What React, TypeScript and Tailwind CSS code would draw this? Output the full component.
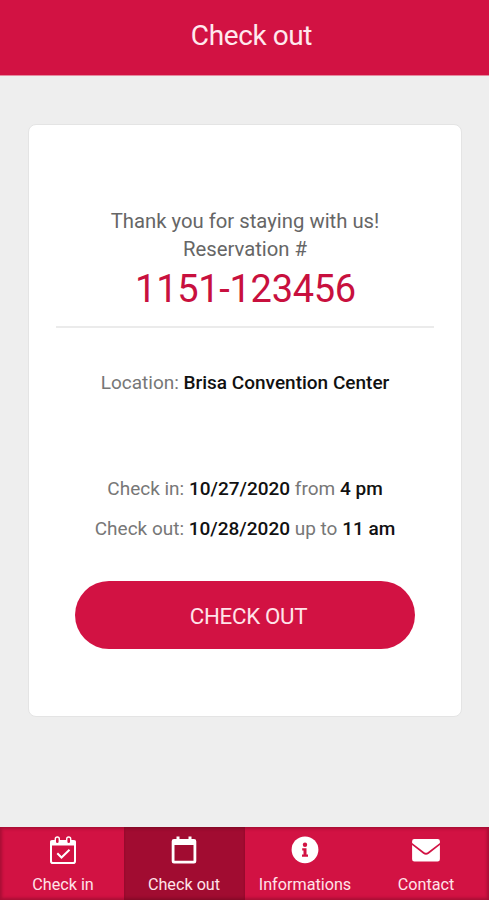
import type { ReactNode } from 'react'
import clsx from 'clsx'

function CalendarCheckIcon() {
  return (
    <svg width="28" height="30" viewBox="0 0 28 30" fill="none" stroke="#fff">
      <rect x="2" y="6" width="24" height="22" rx="1.8" strokeWidth="2" />
      <path d="M1.400 5.500h25.200v5H1.400z" fill="#fff" stroke="none" />
      <rect x="6.300" y="2" width="4" height="6.800" rx="2" fill="#d21243" strokeWidth="1.400" />
      <rect x="17.700" y="2" width="4" height="6.800" rx="2" fill="#d21243" strokeWidth="1.400" />
      <path d="M8.300 18.300l4.200 4.200 8-7.800" strokeWidth="2" />
    </svg>
  )
}

function CalendarIcon() {
  return (
    <svg width="28" height="30" viewBox="0 0 28 30" fill="none">
      <path
        fill="#fff"
        fillRule="evenodd"
        d="M6.500 1.500h3V4h9V1.500h3V4H24a2.300 2.300 0 0 1 2.300 2.300v19.900A2.300 2.300 0 0 1 24 28.500H4a2.300 2.300 0 0 1-2.300-2.300V6.300A2.300 2.300 0 0 1 4 4h2.500zM4.500 10v15.700h19V10z"
      />
    </svg>
  )
}

function InfoIcon() {
  return (
    <svg width="28" height="30" viewBox="0 0 28 30">
      <circle cx="14" cy="14.800" r="13.400" fill="#fff" />
      <circle cx="14" cy="9.800" r="2.200" fill="#d21243" />
      <path d="M11.200 13.300h4.300v6.200h1.500v2.200h-6v-2.200h1.500v-4h-1.300z" fill="#d21243" />
    </svg>
  )
}

function MailIcon() {
  return (
    <svg width="28" height="30" viewBox="0 0 28 30" fill="#fff">
      <path d="M2.500 4h23A2.300 2.300 0 0 1 27.900 6.300v1.600L15.700 17.200a2.900 2.900 0 0 1-3.400 0L.1 7.900V6.300A2.300 2.300 0 0 1 2.500 4z" />
      <path d="M.1 10l11.100 8.700a4.700 4.700 0 0 0 5.600 0L27.900 10v14.200a2.300 2.300 0 0 1-2.300 2.300H2.400A2.300 2.300 0 0 1 .1 24.200z" />
    </svg>
  )
}

interface TabProps {
  label: string
  icon: ReactNode
  active?: boolean
}

function Tab({ label, icon, active }: TabProps) {
  return (
    <button
      className={clsx(
        'flex w-[121px] shrink-0 flex-col items-center pt-2 pr-0.5 text-[16.200px] leading-5 text-[#ffe3e9]',
        active && 'bg-[#a10c31] shadow-[inset_0_3px_3px_-1px_#850a28,inset_0_-3px_3px_-1px_#850a28]',
      )}
    >
      {icon}
      <span className="mt-2.5 ml-px">{label}</span>
    </button>
  )
}

export default function App() {
  return (
    <div className="flex h-[900px] w-[489px] flex-col bg-[#eeeeee] font-['Roboto',sans-serif]">
      <header className="flex h-[76px] shrink-0 items-center justify-center border-b border-[#e58a9f] bg-[#d21243] pb-1 pl-[14px]">
        <h1 className="text-[28px] leading-8 tracking-[-0.4px] text-[#ffe9ee]">Check out</h1>
      </header>

      <main className="flex-1 px-7 pt-12">
        <section className="flex h-[593px] w-[434px] flex-col items-center rounded-lg border border-[#e4e4e4] bg-white px-[27px] pt-[82px] text-center text-[20.300px] text-[#666]">
          <p className="leading-7">Thank you for staying with us!</p>
          <p className="leading-7">Reservation #</p>
          <p className="mt-0.5 pl-px text-[38px] leading-[48px] tracking-[-0.3px] text-[#c8103e]">1151-123456</p>
          <hr className="mt-[13px] w-full border-t-2 border-[#ebebeb]" />

          <p className="mt-[41px] text-[19px] leading-7 text-[#777]">
            Location: <b className="font-medium text-[#111]">Brisa Convention Center</b>
          </p>

          <p className="mt-[78px] text-[19px] leading-7 text-[#777]">
            Check in: <b className="font-medium text-[#111]">10/27/2020</b> from{' '}
            <b className="font-medium text-[#111]">4 pm</b>
          </p>
          <p className="mt-3 text-[19px] leading-7 text-[#777]">
            Check out: <b className="font-medium text-[#111]">10/28/2020</b> up to{' '}
            <b className="font-medium text-[#111]">11 am</b>
          </p>

          <button className="mt-[38px] h-[68px] w-[340px] rounded-full bg-[#d21243] pt-[3px] pl-[7px] text-[22.300px] tracking-[-0.3px] text-[#ffe3e9]">
            CHECK OUT
          </button>
        </section>
      </main>

      <nav className="flex h-[73px] shrink-0 bg-[#d21243] pl-[3px] shadow-[inset_0_0_3px_2px_#a80e35]">
        <Tab label="Check in" icon={<CalendarCheckIcon />} />
        <Tab label="Check out" icon={<CalendarIcon />} active />
        <Tab label="Informations" icon={<InfoIcon />} />
        <Tab label="Contact" icon={<MailIcon />} />
      </nav>
    </div>
  )
}
